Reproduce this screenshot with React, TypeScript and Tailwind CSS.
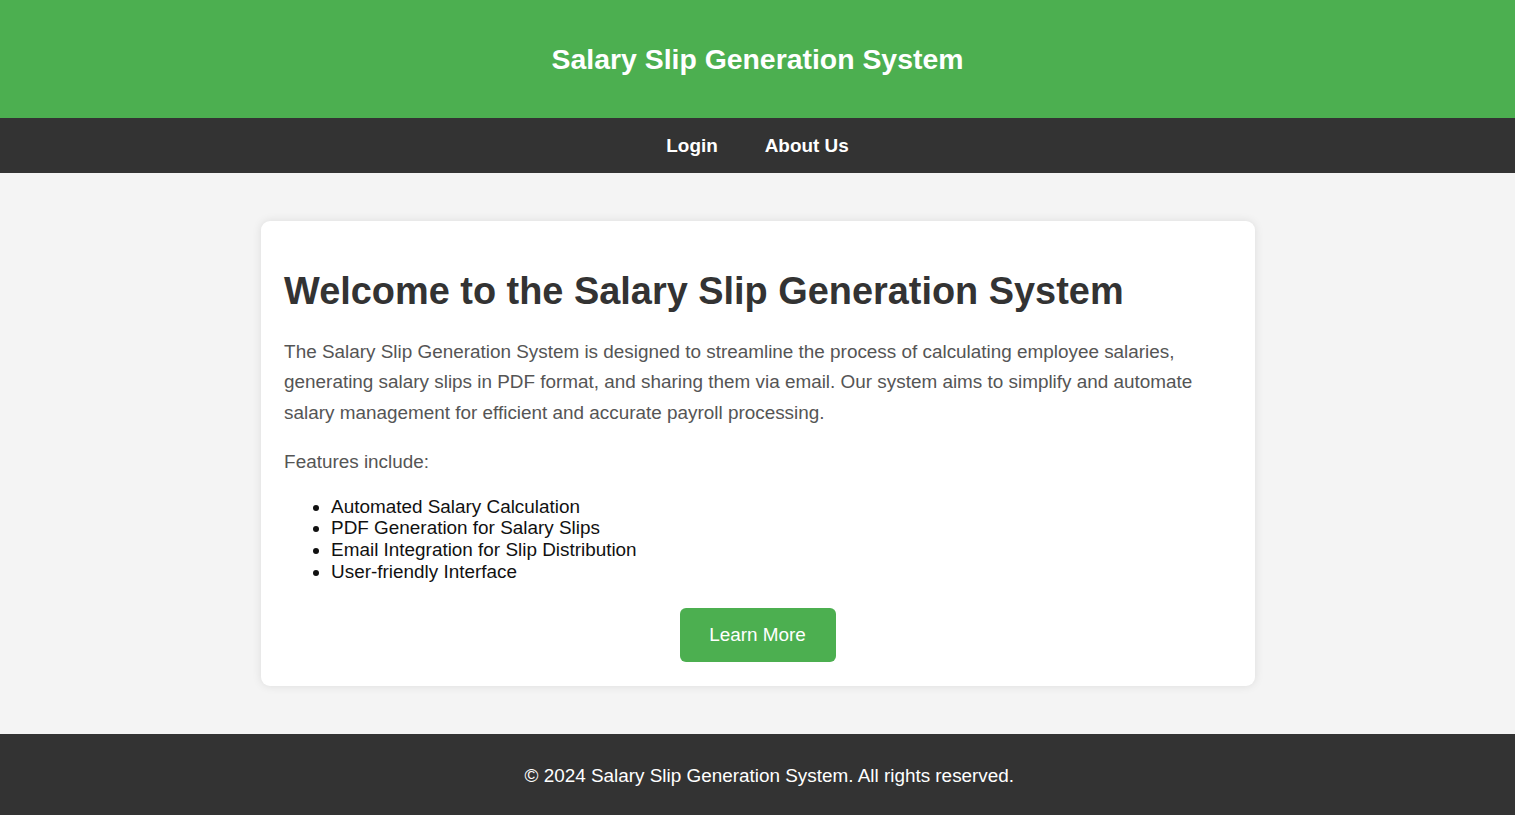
import React from "react";

export default function App() {
  return (
    <div className="min-h-[815px] bg-[#f4f4f4] font-['Liberation_Sans',Arial,sans-serif] text-[18.9px]">
      <header className="flex h-[118px] items-center justify-center bg-[#4CAF50] text-white">
        <h1 className="text-[28.4px] font-bold leading-[33px]">Salary Slip Generation System</h1>
      </header>
      <nav className="flex h-[55px] items-center justify-center gap-[47px] bg-[#333333]">
        <a className="font-bold leading-[22px] text-white">Login</a>
        <a className="font-bold leading-[22px] text-white">About Us</a>
      </nav>
      <main className="flex justify-center py-[48px]">
        <div className="w-[994px] rounded-[9px] bg-white p-[23.6px] shadow-[0_0_10px_rgba(0,0,0,0.1)]">
          <h1 className="mt-[25.3px] text-[37.9px] font-bold leading-[42px] text-[#333333]">
            Welcome to the Salary Slip Generation System
          </h1>
          <p className="mt-[25.3px] leading-[30.2px] text-[#555555]">
            The Salary Slip Generation System is designed to streamline the process of calculating employee salaries,
            generating salary slips in PDF format, and sharing them via email. Our system aims to simplify and automate
            salary management for efficient and accurate payroll processing.
          </p>
          <p className="mt-[18.9px] leading-[30.2px] text-[#555555]">Features include:</p>
          <ul className="mt-[18.9px] list-disc pl-[47px] leading-[21.7px] text-[#111111]">
            <li>Automated Salary Calculation</li>
            <li>PDF Generation for Salary Slips</li>
            <li>Email Integration for Slip Distribution</li>
            <li>User-friendly Interface</li>
          </ul>
          <div className="mt-[25.5px] flex justify-center">
            <a className="flex h-[54px] w-[156px] items-center justify-center rounded-[6px] bg-[#4CAF50] leading-[22px] text-white">
              Learn More
            </a>
          </div>
        </div>
      </main>
      <footer className="flex h-[82px] items-center justify-center bg-[#333333] pl-[23.6px] pt-[2px] text-white">
        <p className="leading-[22px]">© 2024 Salary Slip Generation System. All rights reserved.</p>
      </footer>
    </div>
  );
}
